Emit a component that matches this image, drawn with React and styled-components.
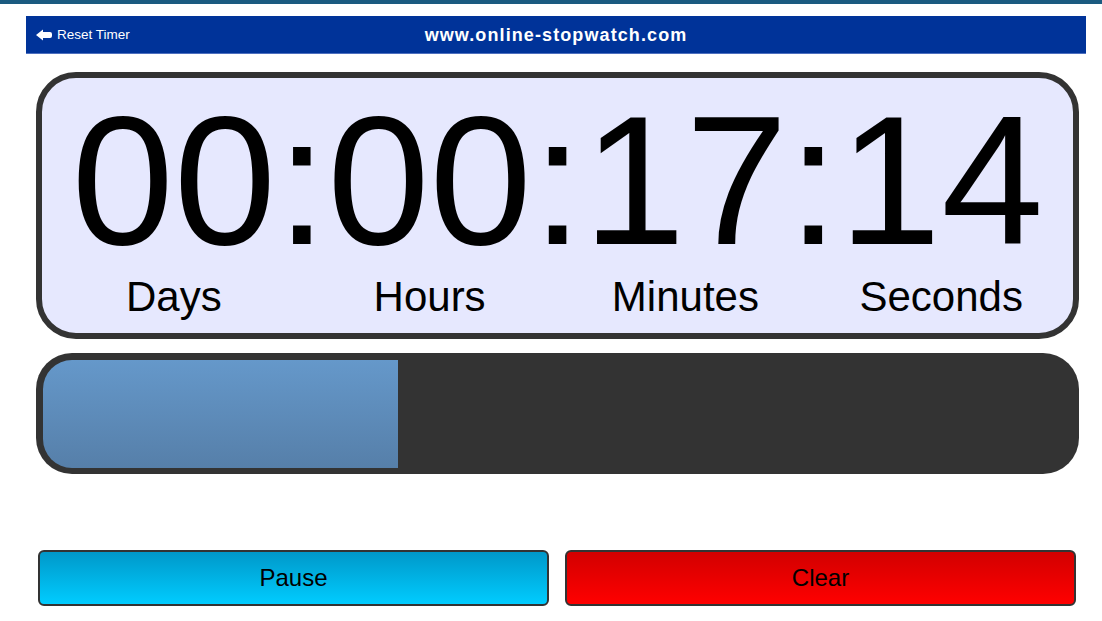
import React from 'react';
import styled, { createGlobalStyle } from 'styled-components';

const GlobalStyle = createGlobalStyle`
  html, body {
    margin: 0;
    padding: 0;
    background: #ffffff;
    font-family: "Liberation Sans", Arial, sans-serif;
  }
`;

// elapsed time shown on the clock and the share of the countdown used up
const timer = { days: '00', hours: '00', minutes: '17', seconds: '14' };
const elapsed = 17 * 60 + 14;
const total = 50 * 60;

const TopStripe = styled.div`
  height: 4px;
  background: #1b5b80;
`;

const Page = styled.div`
  width: 1060px;
  margin: 12px 0 0 26px;
`;

const Header = styled.div`
  display: grid;
  grid-template-columns: 1fr auto 1fr;
  align-items: center;
  height: 37px;
  background: #003399;
  border-bottom: 1px solid #4d6fbf;
  color: #ffffff;
`;

const ResetLink = styled.a`
  display: flex;
  align-items: center;
  gap: 5px;
  padding-left: 10px;
  font-size: 13.5px;
  color: #ffffff;
  text-decoration: none;
  cursor: pointer;
`;

const SiteName = styled.div`
  font-weight: bold;
  font-size: 18px;
  letter-spacing: 1.1px;
  padding-top: 1px;
`;

const ClockPanel = styled.div`
  margin: 18px 7px 0 10px;
  height: 245px;
  border: 6px solid #333333;
  border-radius: 40px;
  background: #e6e8fe;
  padding-top: 10px;
  box-sizing: content-box;
  display: flex;
  justify-content: center;
  align-items: flex-start;
`;

const Unit = styled.div`
  display: flex;
  flex-direction: column;
  align-items: center;
`;

const Digits = styled.div`
  font-size: 184px;
  line-height: 1;
  color: #000000;
`;

const Colon = styled(Digits)``;

const Label = styled.div`
  margin-top: 4px;
  font-size: 42px;
  line-height: 1;
  color: #000000;
  white-space: nowrap;
`;

const ProgressTrack = styled.div`
  margin: 14px 7px 0 10px;
  height: 108px;
  padding: 7px 7px 6px;
  background: #333333;
  border-radius: 36px;
`;

const ProgressFill = styled.div`
  height: 100%;
  border-radius: 29px 0 0 29px;
  background: linear-gradient(to bottom, #6598ca, #567fa9);
`;

const ButtonRow = styled.div`
  display: flex;
  gap: 16px;
  margin: 76px 10px 0 12px;
`;

const Button = styled.button`
  flex: 1;
  height: 56px;
  border: 2.5px solid #333333;
  border-radius: 6px;
  font-family: "Liberation Sans", Arial, sans-serif;
  font-size: 24px;
  color: #000000;
  cursor: pointer;
  background: ${p => p.$variant === 'danger'
    ? 'linear-gradient(to bottom, #d20000, #ff0000)'
    : 'linear-gradient(to bottom, #0098c9, #00ccff)'};
`;

const BackArrow = () => (
  <svg width="16" height="12" viewBox="0 0 16 12">
    <path d="M0 6 L7 0.5 L7 3 L14 3 Q16 3 16 5 L16 7 Q16 9 14 9 L7 9 L7 11.5 Z" fill="#ffffff" />
  </svg>
);

const units = [
  { key: 'days', label: 'Days' },
  { key: 'hours', label: 'Hours' },
  { key: 'minutes', label: 'Minutes' },
  { key: 'seconds', label: 'Seconds' },
];

export default function App() {
  return (
    <>
      <GlobalStyle />
      <TopStripe />
      <Page>
        <Header>
          <ResetLink>
            <BackArrow />
            Reset Timer
          </ResetLink>
          <SiteName>www.online-stopwatch.com</SiteName>
          <div />
        </Header>

        <ClockPanel>
          {units.map((u, i) => (
            <React.Fragment key={u.key}>
              {i > 0 && <Colon>:</Colon>}
              <Unit>
                <Digits>{timer[u.key]}</Digits>
                <Label>{u.label}</Label>
              </Unit>
            </React.Fragment>
          ))}
        </ClockPanel>

        <ProgressTrack>
          <ProgressFill style={{ width: `${(elapsed / total) * 100}%` }} />
        </ProgressTrack>

        <ButtonRow>
          <Button>Pause</Button>
          <Button $variant="danger">Clear</Button>
        </ButtonRow>
      </Page>
    </>
  );
}
